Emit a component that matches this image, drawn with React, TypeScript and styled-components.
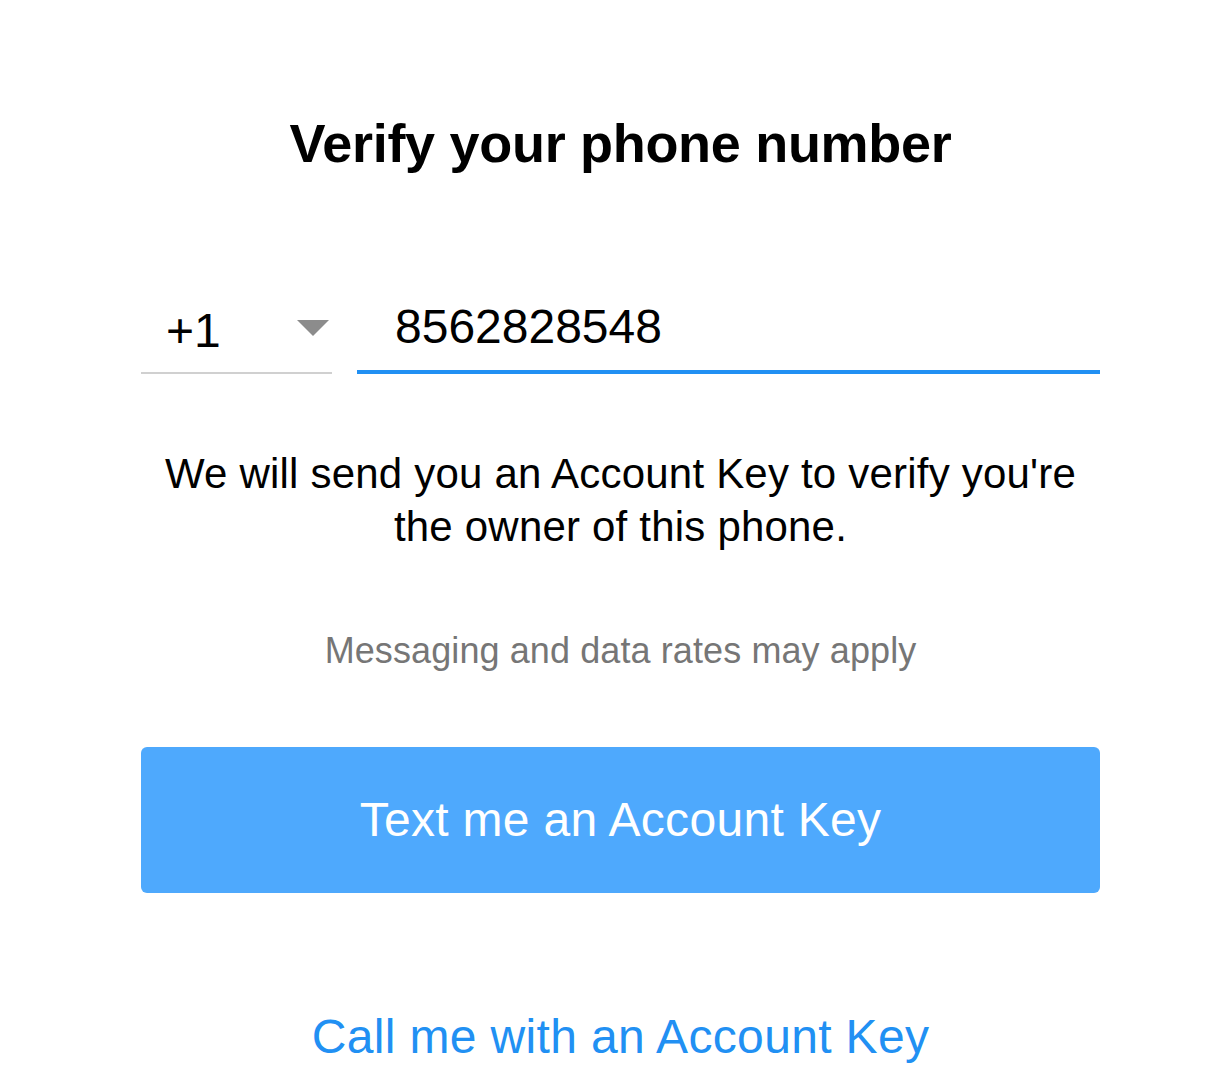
import React, {ChangeEventHandler, FC, useState} from "react";
import styled, {createGlobalStyle} from "styled-components";

const GlobalStyle = createGlobalStyle`
  html, body {
    margin: 0;
    padding: 0;
    background: #ffffff;
  }
  body {
    font-family: "Liberation Sans", Arial, Helvetica, sans-serif;
    color: #000000;
  }
`

const Page = styled.div`
  width: 959px;
  margin-left: 141px;
  padding-top: 111px;
  display: flex;
  flex-direction: column;
  align-items: stretch;
  text-align: center;
`

const Title = styled.h1`
  margin: 0;
  font-size: 54px;
  line-height: 64px;
  font-weight: 700;
  letter-spacing: -0.3px;
`

const PhoneRow = styled.div`
  margin-top: 127px;
  display: flex;
  align-items: flex-end;
  gap: 25px;
`

const CountrySelect = styled.div`
  width: 191px;
  flex-shrink: 0;
  position: relative;
  display: flex;
  align-items: flex-end;
  box-sizing: border-box;
  padding: 0 0 17px 25px;
  border-bottom: 2px solid #d0d0d0;
  font-size: 48px;
  line-height: 48px;
  text-align: left;
`

const Caret = styled.span`
  position: absolute;
  right: 3px;
  top: 13px;
  width: 0;
  height: 0;
  border-left: 16px solid transparent;
  border-right: 16px solid transparent;
  border-top: 16px solid #8c8c8c;
`

const PhoneInput = styled.input`
  flex: 1;
  min-width: 0;
  height: 48px;
  margin: 0;
  padding: 0 0 20px 38px;
  border: none;
  border-bottom: 4px solid #2190f3;
  outline: none;
  background: transparent;
  font-family: inherit;
  font-size: 48px;
  line-height: 48px;
  color: #000000;
`

const Info = styled.p`
  margin: 73px 0 0;
  font-size: 42px;
  line-height: 53px;
  letter-spacing: 0.2px;
`

const Note = styled.p`
  margin: 76px 0 0;
  font-size: 36px;
  line-height: 44px;
  letter-spacing: 0.1px;
  color: #767676;
`

const PrimaryButton = styled.button`
  margin-top: 74px;
  height: 146px;
  border: none;
  border-radius: 6px;
  background: #4ea9fd;
  color: #ffffff;
  font-family: inherit;
  font-size: 48px;
  line-height: 48px;
  letter-spacing: 0.3px;
  cursor: pointer;
`

const LinkButton = styled.button`
  margin: 116px auto 0;
  padding: 0;
  border: none;
  background: none;
  color: #2190f3;
  font-family: inherit;
  font-size: 48px;
  line-height: 56px;
  letter-spacing: 0.35px;
  cursor: pointer;
`

const App: FC = () => {
  const [phone, setPhone] = useState("8562828548");

  const handleChange: ChangeEventHandler<HTMLInputElement> = (event) => {
    setPhone(event.target.value);
  }

  return (
    <>
      <GlobalStyle/>
      <Page>
        <Title>Verify your phone number</Title>
        <PhoneRow>
          <CountrySelect>
            +1
            <Caret/>
          </CountrySelect>
          <PhoneInput type="tel" value={phone} onChange={handleChange}/>
        </PhoneRow>
        <Info>We will send you an Account Key to verify you're the owner of this phone.</Info>
        <Note>Messaging and data rates may apply</Note>
        <PrimaryButton type="button">Text me an Account Key</PrimaryButton>
        <LinkButton type="button">Call me with an Account Key</LinkButton>
      </Page>
    </>
  );
}

export default App;
